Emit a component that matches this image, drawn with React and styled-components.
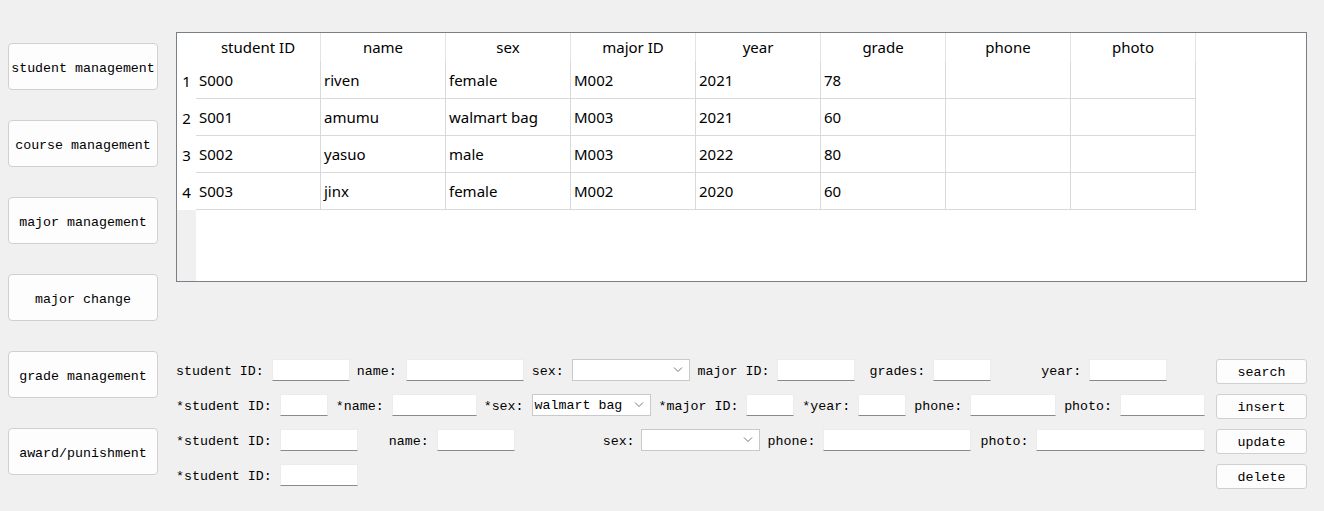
import styled, { createGlobalStyle } from "styled-components";

const GlobalStyle = createGlobalStyle`
  html, body {
    margin: 0;
    padding: 0;
    background: #f0f0f0;
  }
  * { box-sizing: border-box; }
`;

const mono = `"Liberation Mono", "DejaVu Sans Mono", monospace`;
const sans = `"Noto Sans", "Open Sans", sans-serif`;

const Window = styled.div`
  display: flex;
  width: 1324px;
  height: 511px;
  background: #f0f0f0;
`;

const Sidebar = styled.div`
  display: flex;
  flex-direction: column;
  gap: 30px;
  padding: 43px 0 0 8px;
  width: 158px;
`;

const NavButton = styled.button`
  width: 150px;
  height: 47px;
  padding: 3px 0 0;
  background: #fdfdfd;
  border: 1px solid #d0d0d0;
  border-radius: 4px;
  font-family: ${mono};
  font-size: 13.3px;
  color: #000;
  text-align: center;
`;

const Main = styled.div`
  display: flex;
  flex-direction: column;
  margin-left: 18px;
  padding-top: 32px;
  width: 1131px;
`;

const Frame = styled.div`
  display: flex;
  height: 250px;
  border: 1px solid #7a7f85;
  background: #fff;
  font-family: ${sans};
  font-size: 15px;
  color: #000;
`;

const VHeader = styled.div`
  display: flex;
  flex-direction: column;
  width: 19px;
  background: #f0f0f0;
`;

const Corner = styled.div`
  height: 29px;
  background: #fff;
`;

const RowNum = styled.div`
  height: 37px;
  background: #fff;
  display: flex;
  align-items: center;
  justify-content: center;
`;

const Body = styled.div`
  display: flex;
  flex-direction: column;
`;

const HeaderRow = styled.div`
  display: flex;
  height: 29px;
`;

const HeadCell = styled.div`
  width: 125px;
  border-right: 1px solid #e3e3e3;
  display: flex;
  align-items: center;
  justify-content: center;
  padding-bottom: 1px;
`;

const DataRow = styled.div`
  display: flex;
  height: 37px;
`;

const Cell = styled.div`
  width: 125px;
  border-right: 1px solid #d9d9d9;
  border-bottom: 1px solid #d9d9d9;
  display: flex;
  align-items: center;
  padding: 0 0 0 3px;
  white-space: nowrap;
`;

const Form = styled.div`
  display: flex;
  flex-direction: column;
  gap: 10px;
  margin-top: 77px;
`;

const FormRow = styled.div`
  display: flex;
  align-items: flex-start;
  height: 25px;
`;

const Label = styled.span`
  font-family: ${mono};
  font-size: 13.3px;
  line-height: 25px;
  color: #000;
  margin-left: ${(p) => p.$ml || 0}px;
  margin-right: ${(p) => (p.$gap === undefined ? 8 : p.$gap)}px;
  white-space: pre;
`;

const Input = styled.div`
  width: ${(p) => p.$w}px;
  height: 22px;
  background: #fff;
  border: 1px solid #ececec;
  border-bottom: 1px solid #8a8a8a;
`;

const Combo = styled.div`
  position: relative;
  width: ${(p) => p.$w}px;
  height: 22px;
  background: #fff;
  border: 1px solid #c9c9c9;
  font-family: ${mono};
  font-size: 13.3px;
  display: flex;
  align-items: center;
  padding: 1px 0 0 2px;
  white-space: pre;

  svg {
    position: absolute;
    right: 6px;
    top: 6px;
  }
`;

const ActionButton = styled.button`
  margin-left: auto;
  width: 91px;
  height: 25px;
  padding: 2px 0 0;
  background: #fdfdfd;
  border: 1px solid #d0d0d0;
  border-radius: 3px;
  font-family: ${mono};
  font-size: 13.3px;
  color: #000;
`;

const Chevron = () => (
  <svg width="10" height="7" viewBox="0 0 10 7">
    <path d="M1 1.5 L5 5.5 L9 1.5" fill="none" stroke="#777" strokeWidth="1" />
  </svg>
);

const columns = ["student ID", "name", "sex", "major ID", "year", "grade", "phone", "photo"];

const rows = [
  ["S000", "riven", "female", "M002", "2021", "78", "", ""],
  ["S001", "amumu", "walmart bag", "M003", "2021", "60", "", ""],
  ["S002", "yasuo", "male", "M003", "2022", "80", "", ""],
  ["S003", "jinx", "female", "M002", "2020", "60", "", ""],
];

const navItems = [
  "student management",
  "course management",
  "major management",
  "major change",
  "grade management",
  "award/punishment",
];

export default function App() {
  return (
    <>
      <GlobalStyle />
      <Window>
        <Sidebar>
          {navItems.map((n) => (
            <NavButton key={n}>{n}</NavButton>
          ))}
        </Sidebar>
        <Main>
          <Frame>
            <VHeader>
              <Corner />
              {rows.map((r, i) => (
                <RowNum key={i}>{i + 1}</RowNum>
              ))}
            </VHeader>
            <Body>
              <HeaderRow>
                {columns.map((c) => (
                  <HeadCell key={c}>{c}</HeadCell>
                ))}
              </HeaderRow>
              {rows.map((r, i) => (
                <DataRow key={i}>
                  {r.map((v, j) => (
                    <Cell key={j}>{v}</Cell>
                  ))}
                </DataRow>
              ))}
            </Body>
          </Frame>

          <Form>
            <FormRow>
              <Label>student ID:</Label>
              <Input $w={78} />
              <Label $ml={7} $gap={9}>name:</Label>
              <Input $w={118} />
              <Label $ml={8}>sex:</Label>
              <Combo $w={118}><Chevron /></Combo>
              <Label $ml={8}>major ID:</Label>
              <Input $w={78} />
              <Label $ml={14}>grades:</Label>
              <Input $w={58} />
              <Label $ml={50}>year:</Label>
              <Input $w={78} />
              <ActionButton>search</ActionButton>
            </FormRow>
            <FormRow>
              <Label>*student ID:</Label>
              <Input $w={48} />
              <Label $ml={8}>*name:</Label>
              <Input $w={85} />
              <Label $ml={7}>*sex:</Label>
              <Combo $w={119}>walmart bag<Chevron /></Combo>
              <Label $ml={8}>*major ID:</Label>
              <Input $w={48} />
              <Label $ml={8}>*year:</Label>
              <Input $w={48} />
              <Label $ml={8}>phone:</Label>
              <Input $w={86} />
              <Label $ml={8}>photo:</Label>
              <Input $w={85} />
              <ActionButton>insert</ActionButton>
            </FormRow>
            <FormRow>
              <Label>*student ID:</Label>
              <Input $w={78} />
              <Label $ml={31}>name:</Label>
              <Input $w={78} />
              <Label $ml={88} $gap={6}>sex:</Label>
              <Combo $w={119}><Chevron /></Combo>
              <Label $ml={8}>phone:</Label>
              <Input $w={148} />
              <Label $ml={9}>photo:</Label>
              <Input $w={169} />
              <ActionButton>update</ActionButton>
            </FormRow>
            <FormRow>
              <Label>*student ID:</Label>
              <Input $w={78} />
              <ActionButton>delete</ActionButton>
            </FormRow>
          </Form>
        </Main>
      </Window>
    </>
  );
}
